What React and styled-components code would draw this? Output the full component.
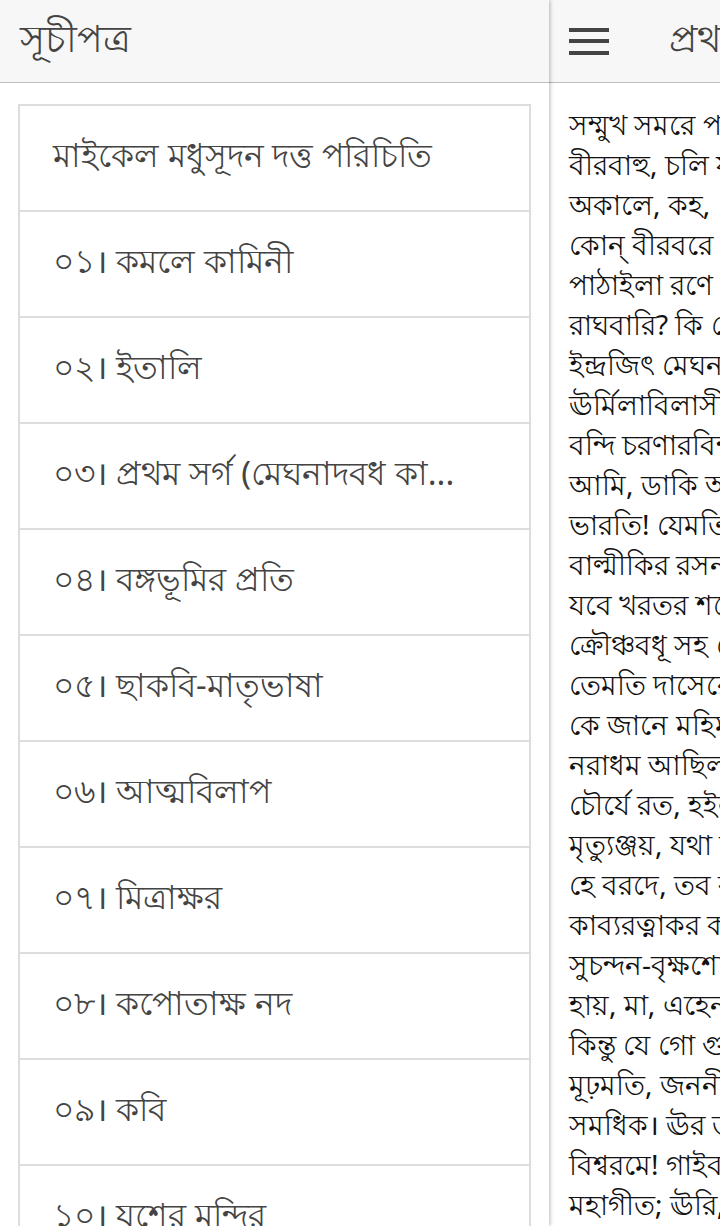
import React from "react";
import styled, { createGlobalStyle } from "styled-components";

const GlobalStyle = createGlobalStyle`
  html, body {
    margin: 0;
    padding: 0;
    overflow: hidden;
    background: #ffffff;
  }
  body {
    font-family: "Noto Sans", "Liberation Sans", sans-serif;
  }
`;

const Page = styled.div`
  display: flex;
  width: 720px;
  height: 1226px;
  overflow: hidden;
`;

const Drawer = styled.aside`
  position: relative;
  z-index: 1;
  flex: 0 0 549px;
  display: flex;
  flex-direction: column;
  background: #ffffff;
  box-shadow: 1px 0 4px rgba(0, 0, 0, 0.28);
`;

const Bar = styled.header`
  display: flex;
  align-items: center;
  gap: ${(p) => p.$gap || 0}px;
  height: 82px;
  padding-left: 20px;
  background: #f7f7f7;
  border-bottom: 1px solid #bdbdbd;
  flex-shrink: 0;
`;

const BarTitle = styled.h1`
  margin: 0;
  font-size: 38px;
  font-weight: 400;
  color: #444444;
  white-space: nowrap;
`;

const MenuButton = styled.button`
  display: flex;
  flex-direction: column;
  justify-content: space-between;
  width: 40px;
  height: 27px;
  padding: 0;
  border: none;
  background: none;

  span {
    display: block;
    height: 4px;
    background: #444444;
  }
`;

const List = styled.ul`
  list-style: none;
  margin: 0;
  padding: 21px 18px 0 18px;
`;

const Item = styled.li`
  display: flex;
  align-items: center;
  height: 104px;
  padding-left: 33px;
  border: 2px solid #dddddd;
  margin-top: -2px;
  font-size: 33px;
  color: #444444;
  white-space: nowrap;
  overflow: hidden;

  &:first-child {
    margin-top: 0;
  }
`;

const Main = styled.main`
  flex: 0 0 720px;
  display: flex;
  flex-direction: column;
  background: #ffffff;
`;

const Poem = styled.div`
  padding: 21px 0 0 20px;
  font-size: 28px;
  line-height: 40px;
  color: #111111;

  p {
    margin: 0;
    white-space: nowrap;
  }
`;

const chapters = [
  "মাইকেল মধুসূদন দত্ত পরিচিতি",
  "০১। কমলে কামিনী",
  "০২। ইতালি",
  "০৩। প্রথম সর্গ (মেঘনাদবধ কা...",
  "০৪। বঙ্গভূমির প্রতি",
  "০৫। ছাকবি-মাতৃভাষা",
  "০৬। আত্মবিলাপ",
  "০৭। মিত্রাক্ষর",
  "০৮। কপোতাক্ষ নদ",
  "০৯। কবি",
  "১০। যশের মন্দির",
];

const lines = [
  "সম্মুখ সমরে পড়ি, বীর-চূড়ামণি",
  "বীরবাহু, চলি যবে গেলা যমপুরে",
  "অকালে, কহ, হে দেবি অমৃতভাষিণি,",
  "কোন্ বীরবরে বরি সেনাপতি-পদে,",
  "পাঠাইলা রণে পুনঃ রক্ষঃকুলনিধি",
  "রাঘবারি? কি কৌশলে, রাক্ষসভরসা",
  "ইন্দ্রজিৎ মেঘনাদে—অজেয় জগতে—",
  "ঊর্মিলাবিলাসী নাশি, ইন্দ্রে নিঃশঙ্কিলা?",
  "বন্দি চরণারবিন্দ, অতি মন্দমতি",
  "আমি, ডাকি আবার তোমায়, শ্বেতভুজে",
  "ভারতি! যেমতি, মাতঃ, বসিলা আসিয়া,",
  "বাল্মীকির রসনায় (পদ্মাসনে যেন)",
  "যবে খরতর শরে, গহন কাননে,",
  "ক্রৌঞ্চবধূ সহ ক্রৌঞ্চে নিষাদ বিঁধিলা,",
  "তেমতি দাসেরে, আসি, দয়া কর, সতি।",
  "কে জানে মহিমা তব এ ভব-মণ্ডলে?",
  "নরাধম আছিল যে নর নরকুলে",
  "চৌর্যে রত, হইল সে তোমার প্রসাদে,",
  "মৃত্যুঞ্জয়, যথা মৃত্যুঞ্জয় উমাপতি!",
  "হে বরদে, তব বরে চোর রত্নাকর",
  "কাব্যরত্নাকর কবি! তোমার পরশে,",
  "সুচন্দন-বৃক্ষশোভা বিষবৃক্ষ ধরে!",
  "হায়, মা, এহেন পুণ্য আছে কি এ দাসে?",
  "কিন্তু যে গো গুণহীন সন্তানের মাঝে",
  "মূঢ়মতি, জননীর স্নেহ তার প্রতি",
  "সমধিক। ঊর তবে, ঊর দয়াময়ি",
  "বিশ্বরমে! গাইব, মা, বীররসে ভাসি,",
  "মহাগীত; ঊরি, দাসে দেহ পদছায়া।",
];

export default function App() {
  return (
    <>
      <GlobalStyle />
      <Page>
        <Drawer>
          <Bar>
            <BarTitle>সূচীপত্র</BarTitle>
          </Bar>
          <List>
            {chapters.map((c) => (
              <Item key={c}>{c}</Item>
            ))}
          </List>
        </Drawer>
        <Main>
          <Bar $gap={60}>
            <MenuButton aria-label="menu">
              <span />
              <span />
              <span />
            </MenuButton>
            <BarTitle>প্রথম সর্গ (মেঘনাদবধ কাব্য)</BarTitle>
          </Bar>
          <Poem>
            {lines.map((l) => (
              <p key={l}>{l}</p>
            ))}
          </Poem>
        </Main>
      </Page>
    </>
  );
}
